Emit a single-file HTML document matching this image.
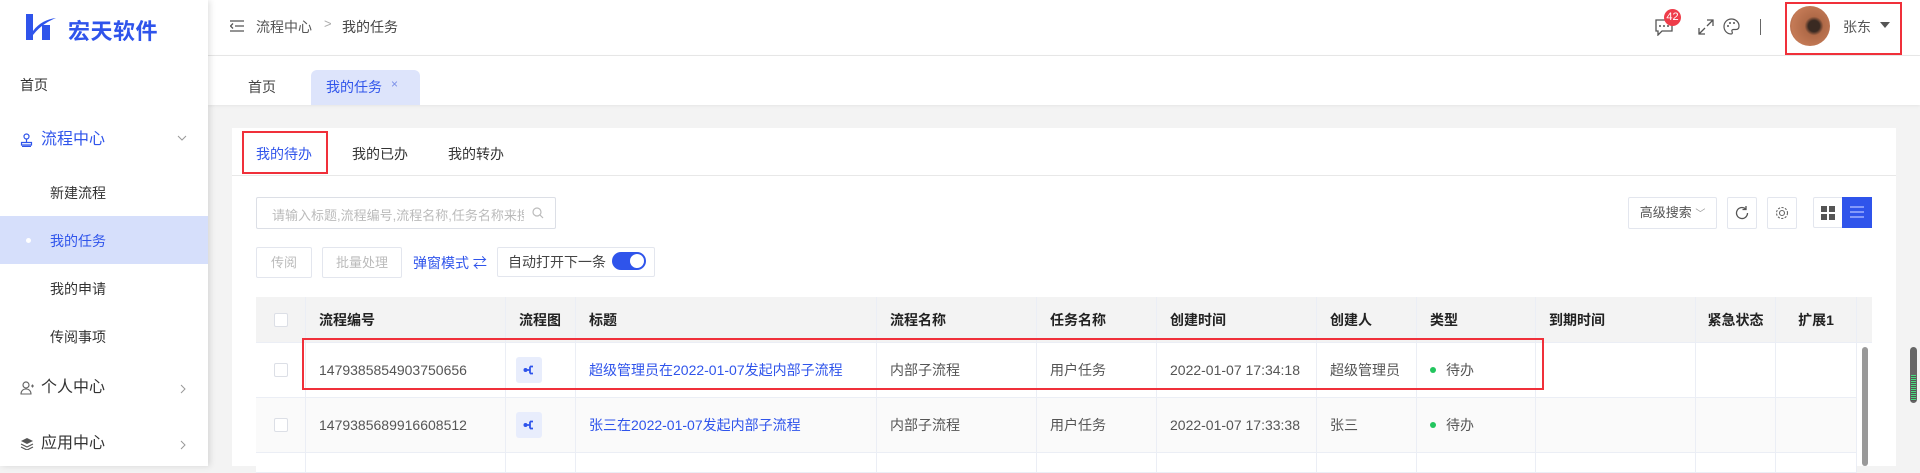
<!DOCTYPE html>
<html><head><meta charset="utf-8"><style>
*{box-sizing:border-box;margin:0;padding:0}
body{width:1920px;height:466px;overflow:hidden;background:#f3f3f3;font-family:"Liberation Sans","Noto Sans CJK SC",sans-serif;color:#333;position:relative;font-size:14px}
.a{position:absolute}
.side{left:0;top:0;width:208px;height:466px;background:#fff;box-shadow:2px 0 6px rgba(0,0,0,.12);z-index:3}
.si{position:absolute;left:0;width:208px;font-size:14px;color:#333;line-height:20px}
.hdr{left:208px;top:0;width:1712px;height:56px;background:#fff;border-bottom:1px solid #e8e8e8}
.tabs{left:208px;top:56px;width:1712px;height:49px;background:#fff;box-shadow:0 1px 3px rgba(0,0,0,.06)}
.card{left:232px;top:128px;width:1664px;height:338px;background:#fff}
.btn{position:absolute;border:1px solid #e3e6ee;border-radius:2px;background:#fff;text-align:center;font-size:13px}
.th,.td{position:absolute;border-right:1px solid #ebeef5;height:100%;padding-left:13px;display:flex;align-items:center}
.th{font-weight:bold;color:#222;font-size:14px}
.td{color:#555;font-size:14px}
.row{position:absolute;left:256px;width:1601px;border-bottom:1px solid #ebeef5}
.cb{width:14px;height:14px;border:1px solid #dcdfe6;border-radius:2px;background:#fff}
.fi{width:26px;height:26px;background:#e8edfc;border-radius:3px;display:flex;align-items:center;justify-content:center}
.lnk{color:#2f54eb}
.dot{display:inline-block;width:6px;height:6px;border-radius:50%;background:#22c55e;margin-right:10px}
</style></head><body>
<div class="a side">
 <svg class="a" style="left:25px;top:13px" width="32" height="28" viewBox="0 0 32 28"><path d="M1 1h7v26H1z" fill="#2f54eb"/><path d="M17 12h8v15h-8z" fill="#2f54eb"/><path d="M8 18 C14 10 22 6 31 5 C24 8 16 12 8 22z" fill="#2f54eb"/></svg>
 <div class="a" style="left:68px;top:14px;font-size:22px;font-weight:bold;color:#2f54eb;letter-spacing:0.5px">宏天软件</div>
 <div class="si" style="top:75px;padding-left:20px">首页</div>
 <svg class="a" style="left:20px;top:133px" width="13" height="14" viewBox="0 0 13 14"><circle cx="6.5" cy="3.5" r="2.5" stroke="#2f54eb" fill="none" stroke-width="1.2"/><path d="M6.5 6v3M1.5 9.5h10v2.5h-10zM2 13.5h9" stroke="#2f54eb" stroke-width="1.2" fill="none"/></svg>
 <div class="si" style="top:130px;padding-left:41px;color:#2f54eb;font-size:16px">流程中心</div>
 <svg class="a" style="left:177px;top:135px" width="10" height="7" viewBox="0 0 10 7"><path d="M1 1l4 4 4-4" stroke="#999" fill="none"/></svg>
 <div class="si" style="top:183px;padding-left:50px">新建流程</div>
 <div class="a" style="left:0;top:216px;width:208px;height:48px;background:#d6dffb"></div>
 <div class="a" style="left:26px;top:238px;width:5px;height:5px;border-radius:50%;background:#fff"></div>
 <div class="si" style="top:231px;padding-left:50px;color:#2f54eb">我的任务</div>
 <div class="si" style="top:279px;padding-left:50px">我的申请</div>
 <div class="si" style="top:327px;padding-left:50px">传阅事项</div>
 <svg class="a" style="left:20px;top:381px" width="14" height="14" viewBox="0 0 14 14"><circle cx="6" cy="4" r="3" stroke="#666" fill="none" stroke-width="1.2"/><path d="M1 13c0-3 2-5 5-5s5 2 5 5zM11 5h3M12.5 3.5v3" stroke="#666" stroke-width="1.1" fill="none"/></svg>
 <div class="si" style="top:378px;padding-left:41px;font-size:16px">个人中心</div>
 <svg class="a" style="left:180px;top:384px" width="7" height="10" viewBox="0 0 7 10"><path d="M1 1l4 4-4 4" stroke="#999" fill="none"/></svg>
 <svg class="a" style="left:20px;top:437px" width="14" height="13" viewBox="0 0 14 13"><path d="M7 1l6 3-6 3-6-3z" fill="#555"/><path d="M1 7l6 3 6-3M1 10l6 3 6-3" stroke="#555" fill="none" stroke-width="1.2"/></svg>
 <div class="si" style="top:434px;padding-left:41px;font-size:16px">应用中心</div>
 <svg class="a" style="left:180px;top:440px" width="7" height="10" viewBox="0 0 7 10"><path d="M1 1l4 4-4 4" stroke="#999" fill="none"/></svg>
</div>
<div class="a hdr">
 <svg class="a" style="left:22px;top:20px" width="14" height="12" viewBox="0 0 14 12"><path d="M0 1h14M5 6h9M0 11h14M3 3.5L0.5 6 3 8.5" stroke="#555" stroke-width="1.3" fill="none"/></svg>
 <div class="a" style="left:48px;top:17px;font-size:14px;color:#555">流程中心</div>
 <div class="a" style="left:116px;top:16px;font-size:13px;color:#aaa">&gt;</div>
 <div class="a" style="left:134px;top:17px;font-size:14px;color:#444">我的任务</div>
 <svg class="a" style="left:1446px;top:18px" width="20" height="18" viewBox="0 0 20 18"><path d="M2 2h16v11H8l-4 4v-4H2z" stroke="#555" stroke-width="1.3" fill="none"/><circle cx="6" cy="8" r="1" fill="#555"/><circle cx="10" cy="8" r="1" fill="#555"/><circle cx="14" cy="8" r="1" fill="#555"/></svg>
 <div class="a" style="left:1456px;top:9px;width:17px;height:17px;border-radius:50%;background:#ee3d4a;color:#fff;font-size:11px;text-align:center;line-height:17px">42</div>
 <svg class="a" style="left:1490px;top:19px" width="16" height="16" viewBox="0 0 16 16"><path d="M9 1h6v6M15 1L9 7M7 15H1V9M1 15l6-6" stroke="#555" stroke-width="1.3" fill="none"/></svg>
 <svg class="a" style="left:1515px;top:18px" width="17" height="17" viewBox="0 0 17 17"><path d="M8.5 1C4 1 1 4.5 1 8.5S4 16 8 16c1.5 0 1.5-1.5 1-2.5s0-2 1.5-2H13c2 0 3-1.5 3-3.5C16 4 12.5 1 8.5 1z" stroke="#555" stroke-width="1.2" fill="none"/><circle cx="5" cy="8" r="1" fill="#555"/><circle cx="7" cy="5" r="1" fill="#555"/><circle cx="11" cy="5" r="1" fill="#555"/></svg>
 <div class="a" style="left:1552px;top:19px;width:1px;height:16px;background:#666"></div>
 <div class="a" style="left:1577px;top:2px;width:117px;height:53px;border:2px solid #f0303a"></div>
 <div class="a" style="left:1582px;top:6px;width:40px;height:40px;border-radius:50%;background:radial-gradient(circle at 60% 50%,#3a2a22 0 18%,#b06a48 30%,#c47a56 70%,#8a4c30 100%)"></div>
 <div class="a" style="left:1635px;top:17px;font-size:14px;color:#555">张东</div>
 <div class="a" style="left:1672px;top:22px;width:0;height:0;border-left:5px solid transparent;border-right:5px solid transparent;border-top:6px solid #555"></div>
</div>
<div class="a tabs">
 <div class="a" style="left:40px;top:21px;font-size:14px;color:#444">首页</div>
 <div class="a" style="left:103px;top:14px;width:109px;height:35px;background:#dde4fb;border-radius:6px 6px 0 0"></div>
 <div class="a" style="left:118px;top:21px;font-size:14px;color:#2f54eb">我的任务</div>
 <div class="a" style="left:183px;top:21px;font-size:12px;color:#7a8fe8">×</div>
</div>
<div class="a card">
 <div class="a" style="left:0;top:47px;width:1664px;height:1px;background:#e8e8e8"></div>
 <div class="a" style="left:10px;top:3px;width:86px;height:43px;border:2px solid #f0303a"></div>
 <div class="a" style="left:24px;top:16px;color:#2f54eb">我的待办</div>
 <div class="a" style="left:120px;top:16px;color:#333">我的已办</div>
 <div class="a" style="left:216px;top:16px;color:#333">我的转办</div>
 <div class="a" style="left:24px;top:69px;width:300px;height:32px;border:1px solid #dcdfe6;border-radius:2px"></div>
 <div class="a" style="left:40px;top:77px;font-size:13px;color:#bbb;width:252px;overflow:hidden;white-space:nowrap">请输入标题,流程编号,流程名称,任务名称来搜索</div>
 <svg class="a" style="left:300px;top:79px" width="12" height="12" viewBox="0 0 12 12"><circle cx="5" cy="5" r="4" stroke="#bbb" fill="none" stroke-width="1.2"/><path d="M8 8l3 3" stroke="#bbb" stroke-width="1.2"/></svg>
 <div class="btn" style="left:24px;top:119px;width:56px;height:31px;line-height:29px;color:#bbb">传阅</div>
 <div class="btn" style="left:90px;top:119px;width:80px;height:31px;line-height:29px;color:#bbb">批量处理</div>
 <div class="a" style="left:181px;top:125px;font-size:14px;color:#2f54eb">弹窗模式 <span style="font-size:14px">⇄</span></div>
 <div class="btn" style="left:265px;top:119px;width:158px;height:30px;line-height:28px;color:#444;text-align:left;padding-left:10px;font-size:14px">自动打开下一条</div>
 <div class="a" style="left:380px;top:124px;width:34px;height:18px;border-radius:9px;background:#2f54eb"><div class="a" style="left:18px;top:2px;width:14px;height:14px;border-radius:50%;background:#fff"></div></div>
 <div class="btn" style="left:1396px;top:69px;width:89px;height:32px;line-height:30px;color:#555">高级搜索 <span style="color:#999;font-size:10px">﹀</span></div>
 <div class="btn" style="left:1495px;top:69px;width:30px;height:32px"><svg style="margin-top:7px" width="16" height="16" viewBox="0 0 16 16"><path d="M13.5 8A5.5 5.5 0 1 1 11.5 3.8M12 1v3.5H8.5" stroke="#555" stroke-width="1.3" fill="none"/></svg></div>
 <div class="btn" style="left:1535px;top:69px;width:30px;height:32px"><svg style="margin-top:7px" width="16" height="16" viewBox="0 0 16 16"><circle cx="8" cy="8" r="2.5" stroke="#666" fill="none" stroke-width="1.1"/><circle cx="8" cy="8" r="5.5" stroke="#666" fill="none" stroke-width="1.1" stroke-dasharray="2.2 1.4"/></svg></div>
 <div class="btn" style="left:1581px;top:69px;width:30px;height:31px"><svg style="margin-top:7px" width="16" height="16" viewBox="0 0 16 16"><path d="M1 1h6v6H1zM9 1h6v6H9zM1 9h6v6H1zM9 9h6v6H9z" fill="#555"/></svg></div>
 <div class="a" style="left:1610px;top:69px;width:30px;height:31px;background:#2f54eb"><svg style="margin:8px 0 0 7px" width="16" height="14" viewBox="0 0 16 14"><path d="M1 2h14M1 7h14M1 12h14" stroke="#9fb0ff" stroke-width="1.5"/></svg></div>
</div>
<div class="a" style="left:256px;top:297px;width:1616px;height:169px;border-left:1px solid #ebeef5"></div>
<div class="row" style="top:297px;height:46px;background:#f3f3f3;width:1616px">
 <div class="th" style="left:0;width:50px;justify-content:center;padding:0"><div class="cb"></div></div>
 <div class="th" style="left:50px;width:200px">流程编号</div>
 <div class="th" style="left:250px;width:70px">流程图</div>
 <div class="th" style="left:320px;width:301px">标题</div>
 <div class="th" style="left:621px;width:160px">流程名称</div>
 <div class="th" style="left:781px;width:120px">任务名称</div>
 <div class="th" style="left:901px;width:160px">创建时间</div>
 <div class="th" style="left:1061px;width:100px">创建人</div>
 <div class="th" style="left:1161px;width:119px">类型</div>
 <div class="th" style="left:1280px;width:160px">到期时间</div>
 <div class="th" style="left:1440px;width:80px;justify-content:center;padding:0">紧急状态</div>
 <div class="th" style="left:1520px;width:81px;justify-content:center;padding:0">扩展1</div>
</div>
<div class="row" style="top:343px;height:55px;background:#fff">
 <div class="td" style="left:0;width:50px;justify-content:center;padding:0"><div class="cb"></div></div>
 <div class="td" style="left:50px;width:200px">1479385854903750656</div>
 <div class="td" style="left:250px;width:70px;padding-left:10px"><div class="fi"><svg width="12" height="12" viewBox="0 0 12 12"><circle cx="2.5" cy="6" r="2" fill="#2f54eb"/><path d="M4 6h3M7 2.5v7M7 2.5h3M7 9.5h3" stroke="#2f54eb" stroke-width="1.8" fill="none"/></svg></div></div>
 <div class="td lnk" style="left:320px;width:301px">超级管理员在2022-01-07发起内部子流程</div>
 <div class="td" style="left:621px;width:160px">内部子流程</div>
 <div class="td" style="left:781px;width:120px">用户任务</div>
 <div class="td" style="left:901px;width:160px">2022-01-07 17:34:18</div>
 <div class="td" style="left:1061px;width:100px">超级管理员</div>
 <div class="td" style="left:1161px;width:119px"><span class="dot"></span>待办</div>
 <div class="td" style="left:1280px;width:160px"></div>
 <div class="td" style="left:1440px;width:80px"></div>
 <div class="td" style="left:1520px;width:81px"></div>
</div>
<div class="row" style="top:398px;height:55px;background:#fafafa">
 <div class="td" style="left:0;width:50px;justify-content:center;padding:0"><div class="cb"></div></div>
 <div class="td" style="left:50px;width:200px">1479385689916608512</div>
 <div class="td" style="left:250px;width:70px;padding-left:10px"><div class="fi"><svg width="12" height="12" viewBox="0 0 12 12"><circle cx="2.5" cy="6" r="2" fill="#2f54eb"/><path d="M4 6h3M7 2.5v7M7 2.5h3M7 9.5h3" stroke="#2f54eb" stroke-width="1.8" fill="none"/></svg></div></div>
 <div class="td lnk" style="left:320px;width:301px">张三在2022-01-07发起内部子流程</div>
 <div class="td" style="left:621px;width:160px">内部子流程</div>
 <div class="td" style="left:781px;width:120px">用户任务</div>
 <div class="td" style="left:901px;width:160px">2022-01-07 17:33:38</div>
 <div class="td" style="left:1061px;width:100px">张三</div>
 <div class="td" style="left:1161px;width:119px"><span class="dot"></span>待办</div>
 <div class="td" style="left:1280px;width:160px"></div>
 <div class="td" style="left:1440px;width:80px"></div>
 <div class="td" style="left:1520px;width:81px"></div>
</div>
<div class="row" style="top:453px;height:20px;background:#fff">
 <div class="td" style="left:0;width:50px"></div><div class="td" style="left:50px;width:200px"></div><div class="td" style="left:250px;width:70px"></div><div class="td" style="left:320px;width:301px"></div><div class="td" style="left:621px;width:160px"></div><div class="td" style="left:781px;width:120px"></div><div class="td" style="left:901px;width:160px"></div><div class="td" style="left:1061px;width:100px"></div><div class="td" style="left:1161px;width:119px"></div><div class="td" style="left:1280px;width:160px"></div><div class="td" style="left:1440px;width:80px"></div><div class="td" style="left:1520px;width:81px"></div>
</div>
<div class="a" style="left:1862px;top:347px;width:6px;height:119px;border-radius:3px;background:#999"></div>
<div class="a" style="left:302px;top:338px;width:1242px;height:52px;border:2px solid #f0303a"></div>
<div class="a" style="left:1910px;top:347px;width:7px;height:56px;border-radius:4px;background:#666"><div class="a" style="left:1px;top:28px;width:5px;height:26px;background:repeating-linear-gradient(#4ade80 0 1px,#555 1px 2px)"></div></div>
</body></html>
